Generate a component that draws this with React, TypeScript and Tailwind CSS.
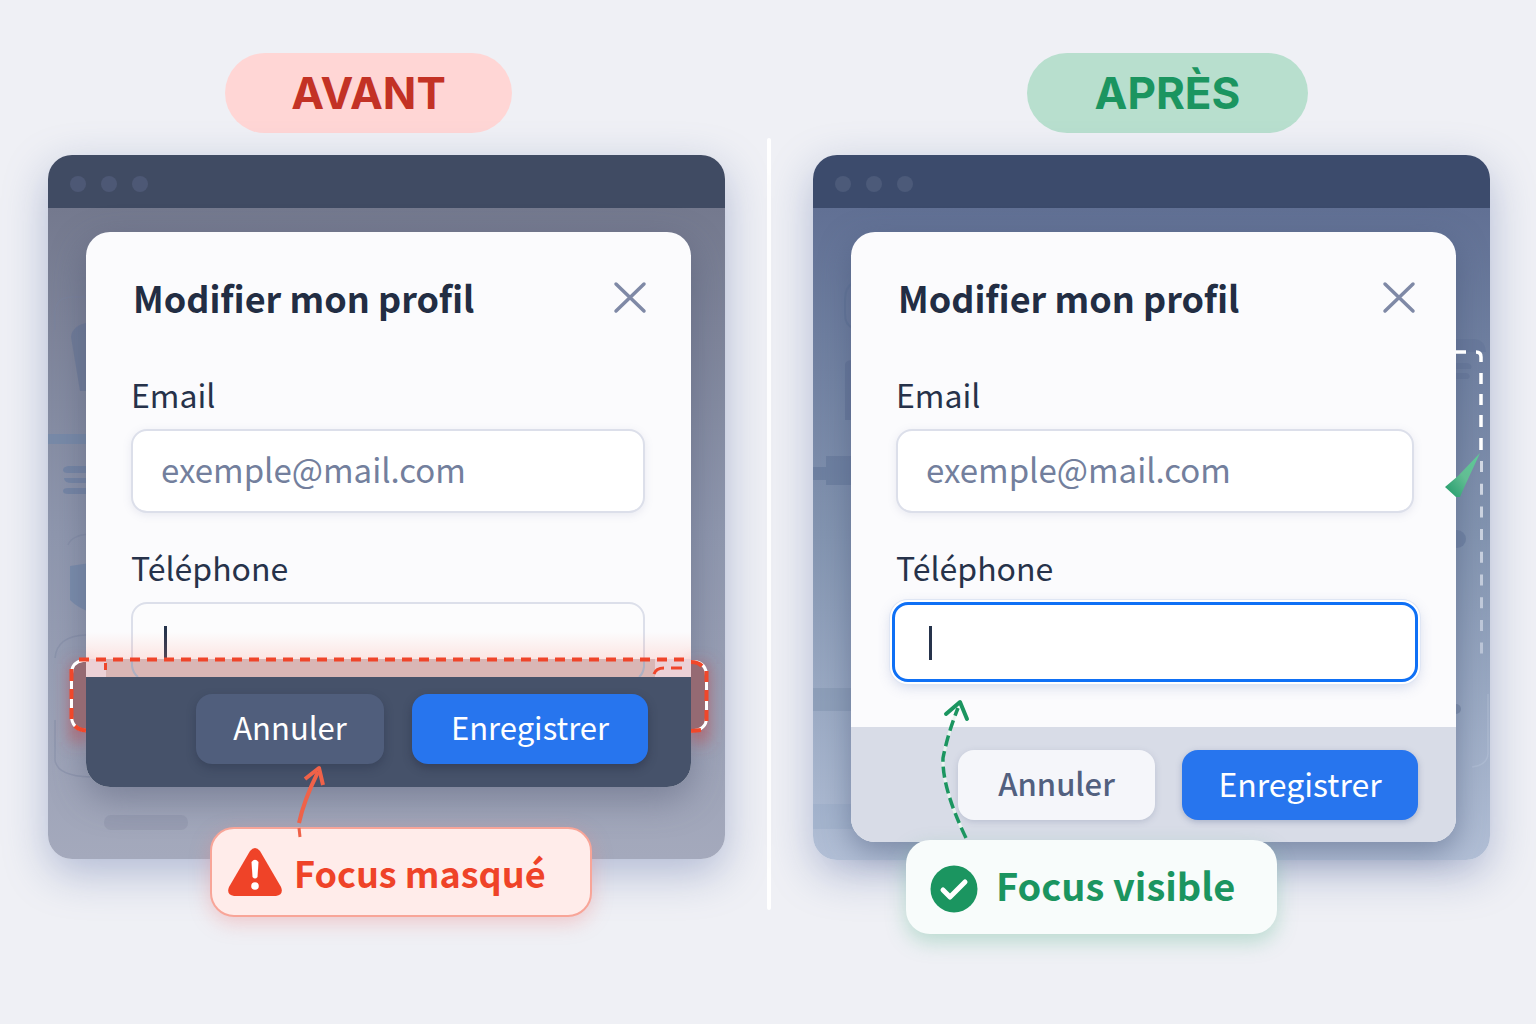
import { FC, ReactNode } from "react";

interface PanelProps {
     children: ReactNode;
}

interface BrowserProps extends PanelProps {
     barClass: string;
     dotClass: string;
     bodyClass: string;
}

const cjk = "font-['Noto_Sans_CJK_JP','Noto_Sans',sans-serif]";

const Browser: FC<BrowserProps> = ({ barClass, dotClass, bodyClass, children }) => {
     return (
          <div className="relative rounded-3xl shadow-[0_14px_44px_rgba(110,128,175,0.48)]">
               <div className={`flex h-[53px] items-center gap-[15px] rounded-t-3xl pt-1 pl-[22px] ${barClass}`}>
                    <span className={`size-4 rounded-full ${dotClass}`} />
                    <span className={`size-4 rounded-full ${dotClass}`} />
                    <span className={`size-4 rounded-full ${dotClass}`} />
               </div>
               <div className={`relative rounded-b-3xl pt-6 pr-[34px] pl-[38px] ${bodyClass}`}>
                    {children}
               </div>
          </div>
     );
};

const ModalHeader: FC = () => {
     return (
          <div className="flex items-start justify-between">
               <h2 className="pl-[2px] text-[36px] leading-[44px] font-bold text-[#222d43]">
                    Modifier mon profil
               </h2>
               <button type="button" aria-label="Fermer" className="-mr-1 pt-1">
                    <svg width="38" height="38" viewBox="0 0 38 38" fill="none" stroke="#7f89a6" strokeWidth="3.500" strokeLinecap="round">
                         <path d="M5 5 33 32M33 5 5 32" />
                    </svg>
               </button>
          </div>
     );
};

const Caret: FC = () => (
     <span className="absolute top-6 left-[33px] h-[34px] w-[3px] bg-[#26334b]" />
);

interface FieldsProps {
     prefix: string;
     focused?: boolean;
}

const Fields: FC<FieldsProps> = ({ prefix, focused }) => {
     return (
          <div className="mt-[55px]">
               <label htmlFor={`${prefix}-email`} className="block text-[32px] leading-10 text-[#26324a]">
                    Email
               </label>
               <input
                    id={`${prefix}-email`}
                    type="email"
                    placeholder="exemple@mail.com"
                    className="mt-[15px] block h-[84px] w-full rounded-2xl border-2 border-[#dcdfea] bg-white px-7 pb-1 text-[33px] text-[#26324a] shadow-[0_2px_8px_rgba(120,130,170,0.15)] outline-none placeholder:text-[#737f9d]"
               />
               <label htmlFor={`${prefix}-tel`} className="mt-[34px] block text-[32px] leading-10 text-[#26324a]">
                    Téléphone
               </label>
               <div className="relative mt-[15px]">
                    {focused ? (
                         <input
                              id={`${prefix}-tel`}
                              type="tel"
                              className="-mx-1 block h-20 w-[calc(100%+8px)] rounded-2xl border-[3px] border-[#0f70f5] bg-white px-7 text-[33px] shadow-[0_0_0_2px_#fff,0_0_0_3px_#dfe6f4,0_4px_14px_rgba(100,120,180,0.3)] outline-none"
                         />
                    ) : (
                         <input
                              id={`${prefix}-tel`}
                              type="tel"
                              className="block h-20 w-full rounded-2xl border-2 border-[#dcdfea] bg-[#fcfcfd] px-7 text-[33px] outline-none"
                         />
                    )}
                    <Caret />
               </div>
          </div>
     );
};

// Placeholder shapes of the page that sits behind the first modal
const BackdropBefore: FC = () => (
     <svg className="absolute top-0 left-0" width="140" height="650" viewBox="48 208 140 650" fill="none">
          <path d="M55 330V312Q56 297 72 297H100M55 658Q57 636 86 635M68 545Q72 535 90 534M55 720V760Q57 776 90 777" stroke="#7b849f" strokeOpacity=".4" strokeWidth="1.5" />
          <path d="M71 337Q72 325 90 322V391H80Z" fill="#6a7797" fillOpacity=".7" />
          <path d="M48 434H90V444H48Z" fill="#7388a9" fillOpacity=".75" />
          <path d="M68 466H90V473H68Q63 473 63 470T68 466ZM68 478H90V483H72Q64 483 64 478ZM68 488H90V494H68Q63 494 63 491T68 488Z" fill="#6f82a4" fillOpacity=".8" />
          <path d="M70 566 90 563V612Q78 608 70 600Z" fill="#7589ab" fillOpacity=".8" />
          <rect x="104" y="815" width="84" height="15" rx="7" fill="#82879e" fillOpacity=".3" />
     </svg>
);

const BackdropAfter: FC = () => (
     <>
          <svg className="absolute top-0 left-0" width="60" height="650" viewBox="812 208 60 650" fill="none">
               <path d="M852 283Q844 287 844 300V314Q844 325 852 328" stroke="#5f7295" strokeWidth="2" strokeOpacity=".7" />
               <path d="M844 364Q845 360 852 360V420H844Z" fill="#5f7095" fillOpacity=".6" />
               <path d="M825 456H852V485H825V480H812V467H825Z" fill="#647799" fillOpacity=".6" />
               <path d="M812 688H852V711H812Z" fill="#8395b1" fillOpacity=".55" />
               <path d="M812 804H852V829H812Z" fill="#93a5c4" fillOpacity=".3" />
          </svg>
          <svg className="absolute top-0 right-0" width="40" height="650" viewBox="1450 208 40 650" fill="none">
               <path d="M1450 339H1475Q1485 340 1486 352H1450ZM1450 363H1467Q1473 364 1471 369H1450ZM1450 373H1467Q1472 376 1468 379H1450Z" fill="#657799" fillOpacity=".65" />
               <circle cx="1457" cy="539" r="9" fill="#6e80a1" fillOpacity=".8" />
               <circle cx="1456" cy="709" r="5" fill="#8091ad" />
               <path d="M1488 694V754Q1487 765 1472 767" stroke="#bfcbe0" strokeOpacity=".35" strokeWidth="1.5" />
          </svg>
     </>
);

const MaskedFocus: FC = () => (
     <svg
          className="absolute -top-[37px] -left-[26px] h-[120px] w-[calc(100%+55px)]"
          viewBox="60 640 660 120"
          preserveAspectRatio="none"
          fill="none"
          overflow="visible"
     >
          <defs>
               <filter id="glow" x="-20%" y="-60%" width="140%" height="220%">
                    <feGaussianBlur stdDeviation="8" />
               </filter>
               <linearGradient id="haze" x1="0" y1="0" x2="0" y2="1">
                    <stop offset="0" stopColor="#ff8a78" stopOpacity="0" />
                    <stop offset="1" stopColor="#ff8a78" stopOpacity=".2" />
               </linearGradient>
          </defs>
          <path d="M86 664H71V742H86ZM691 664H708V742H691Z" fill="#c04a50" fillOpacity=".65" filter="url(#glow)" />
          <rect x="86" y="632" width="605" height="27" fill="url(#haze)" />
          <path d="M86 660H82Q71 662 71 674V716Q71 731 86 732ZM691 661H695Q708 663 708 676V718Q708 732 691 732Z" fill="#956a73" />
          <path d="M86 659H691V677H86Z" fill="#ecd1d6" />
          <path d="M106 659H655V677H106Z" fill="#d9b6b5" />
          <path d="M132 659V666Q133 673 138 677M644 659V667Q643 674 639 677" stroke="#aeb0c2" strokeWidth="2" />
          <path d="M86 660.500H83Q71.500 662 71.500 674V716Q71.500 729 86 730.500M691 661.500H694Q706.500 663 706.500 676V718Q706.500 730 691 731" stroke="#fff" strokeWidth="3" />
          <path d="M71.500 669V681M71.500 689V699M71.500 708V719M75 726Q79 730 86 730.500M691 662Q698 662 702 666M706.500 671V682M706.500 690V701M706.500 710V721M691 731 701 730" stroke="#f0472a" strokeWidth="4" />
          <path d="M79 659.500H691" stroke="#ef452a" strokeWidth="4" strokeDasharray="10 7" />
          <path d="M105.500 663V670M671 668H682M654 674Q656 668 664 668" stroke="#ef452a" strokeWidth="3" />
     </svg>
);

const App: FC = () => {
     return (
          <main className={`min-h-screen bg-[#eff0f5] pt-[53px] pr-[46px] pl-12 ${cjk}`}>
               <div className="grid grid-cols-[minmax(0,1fr)_4px_minmax(0,1fr)] gap-x-[42px]">
                    <section className="pb-[50px]">
                         <div className="flex justify-center pr-9">
                              <h1 className="rounded-full bg-[#ffd6d5] px-[66px] font-['Inter',sans-serif] text-[44px] leading-[80px] font-bold text-[#c33225]">
                                   AVANT
                              </h1>
                         </div>
                         <div className="relative mt-[22px]">
                              <Browser
                                   barClass="bg-[#404b63]"
                                   dotClass="bg-[#4d5875]"
                                   bodyClass="bg-linear-to-b from-[#74798e] via-[#8f97ae] to-[#a4a9bc] pb-[72px]"
                              >
                                   <BackdropBefore />
                                   <div className="relative rounded-3xl bg-[#fbfbfd] shadow-[0_12px_36px_rgba(65,72,100,0.4)]">
                                        <div className="pt-[43px] pr-[46px] pl-[45px]">
                                             <ModalHeader />
                                             <Fields prefix="before" />
                                        </div>
                                        <div className="relative -mt-[5px]">
                                             <MaskedFocus />
                                             <div className="relative flex items-center justify-end gap-7 rounded-b-3xl bg-[#46526a] px-[43px] pt-[17px] pb-[23px]">
                                                  <button type="button" className="h-[70px] w-[188px] rounded-2xl bg-[#505e7c] pb-1 text-[31px] text-white shadow-[0_4px_10px_rgba(35,42,65,0.35)]">
                                                       Annuler
                                                  </button>
                                                  <button type="button" className="h-[70px] w-[236px] rounded-2xl bg-[#2775ee] pb-1 text-[31px] text-white shadow-[0_4px_10px_rgba(35,42,65,0.45)]">
                                                       Enregistrer
                                                  </button>
                                             </div>
                                        </div>
                                   </div>
                              </Browser>
                              <div className="absolute top-[672px] left-[162px] flex h-[90px] items-center rounded-3xl border-2 border-[#f8a598] bg-[#ffecea] pr-11 pl-4 shadow-[0_6px_20px_rgba(240,130,130,0.35)]">
                                   <svg width="54" height="48" viewBox="0 0 54 48">
                                        <path d="M22 3Q27-3 32 3L53 39Q56 47 48 48H6Q-2 47 1 39Z" fill="#ef4328" />
                                        <path d="M23.500 14Q27 9.500 30.500 14L29.500 29Q27 32 24.500 29Z" fill="#fff" />
                                        <circle cx="27" cy="38" r="3.800" fill="#fff" />
                                   </svg>
                                   <p className="ml-3 text-[36px] leading-[48px] font-bold text-[#ef4328]">
                                        Focus masqué
                                   </p>
                              </div>
                              <svg className="absolute top-[605px] left-[242px]" width="50" height="80" viewBox="290 760 50 80" fill="none" stroke="#ef6249" strokeWidth="4">
                                   <path d="M299 823Q304 800 318 772" />
                                   <path d="M305 779 319 768 323 785" strokeLinejoin="round" />
                                   <path d="M299 828 300 837" strokeWidth="3" />
                              </svg>
                         </div>
                    </section>

                    <div className="mt-[85px] rounded-full bg-white" />

                    <section className="pb-[50px]">
                         <div className="flex justify-center pl-8">
                              <h1 className="rounded-full bg-[#b8dfce] px-[68px] font-['Inter',sans-serif] text-[44px] leading-[80px] font-bold text-[#1b9560]">
                                   APRÈS
                              </h1>
                         </div>
                         <div className="relative mt-[22px]">
                              <Browser
                                   barClass="bg-[#3c4b6c]"
                                   dotClass="bg-[#4c5a79]"
                                   bodyClass="bg-linear-to-b from-[#617094] via-[#8394b0] to-[#b2bfd6] pb-[18px]"
                              >
                                   <BackdropAfter />
                                   <div className="relative rounded-3xl bg-[#fbfbfd] shadow-[0_10px_30px_rgba(70,85,120,0.5)]">
                                        <div className="pt-[43px] pr-[42px] pb-[45px] pl-[45px]">
                                             <ModalHeader />
                                             <Fields prefix="after" focused />
                                        </div>
                                        <div className="flex items-center justify-end gap-[27px] rounded-b-3xl bg-[#d8dce7] px-[38px] pt-[23px] pb-[22px]">
                                             <button type="button" className="h-[70px] w-[197px] rounded-2xl bg-[#f5f6fa] pb-1 text-[31px] font-medium text-[#52607f] shadow-[0_2px_6px_rgba(120,130,160,0.3)]">
                                                  Annuler
                                             </button>
                                             <button type="button" className="h-[70px] w-[236px] rounded-2xl bg-[#2775ee] pb-1 text-[32px] text-white shadow-[0_2px_6px_rgba(100,115,155,0.4)]">
                                                  Enregistrer
                                             </button>
                                        </div>
                                   </div>
                              </Browser>
                              <svg className="absolute top-[190px] right-0" width="50" height="320" viewBox="1440 345 50 320" fill="none">
                                   <defs>
                                        <linearGradient id="fade" gradientUnits="userSpaceOnUse" x1="0" y1="448" x2="0" y2="660">
                                             <stop offset="0" stopColor="#d3d9e4" />
                                             <stop offset="1" stopColor="#b9c3d6" />
                                        </linearGradient>
                                        <linearGradient id="leaf" x1="1" y1="0" x2="0" y2="1">
                                             <stop offset="0" stopColor="#5ecb98" />
                                             <stop offset=".5" stopColor="#62bd93" />
                                             <stop offset="1" stopColor="#1f9a68" />
                                        </linearGradient>
                                   </defs>
                                   <path d="M1456 352H1466M1476 352Q1481 352 1481 357V362M1481 373V384M1481 394V405M1481 415V427M1481 438V450" stroke="#fff" strokeWidth="3.500" />
                                   <path d="M1481.500 461V660" stroke="url(#fade)" strokeWidth="3" strokeDasharray="11 11.700" />
                                   <path d="M1480 453 1463 490 1460 497H1456L1445 487 1458 476Z" fill="url(#leaf)" />
                              </svg>
                              <svg className="absolute top-[540px] left-[117px]" width="60" height="150" viewBox="930 695 60 150" fill="none" stroke="#1b9560" strokeWidth="4">
                                   <path d="M966 838Q942 788 943 758 948 733 958 708" stroke="#e8f5ef" strokeWidth="3" />
                                   <path d="M966 838Q942 788 943 758 948 733 958 708" strokeWidth="3.500" strokeDasharray="11 5" />
                                   <path d="M946 714 960 702 967 719" strokeLinecap="round" strokeLinejoin="round" />
                              </svg>
                              <div className="absolute top-[685px] left-[93px] flex h-[94px] items-center rounded-3xl bg-[#f8fcfb] pr-[42px] pl-6 shadow-[0_8px_20px_rgba(90,180,140,0.35)]">
                                   <svg className="mt-1" width="48" height="48" viewBox="0 0 48 48" fill="none">
                                        <circle cx="24" cy="24" r="23.500" fill="#1b9560" />
                                        <path d="M13 25 20 32 35 17" stroke="#fff" strokeWidth="5" strokeLinecap="round" strokeLinejoin="round" />
                                   </svg>
                                   <p className="ml-[18px] pb-1 text-[38px] leading-[48px] font-bold text-[#1b9560]">
                                        Focus visible
                                   </p>
                              </div>
                         </div>
                    </section>
               </div>
          </main>
     );
};

export default App;
